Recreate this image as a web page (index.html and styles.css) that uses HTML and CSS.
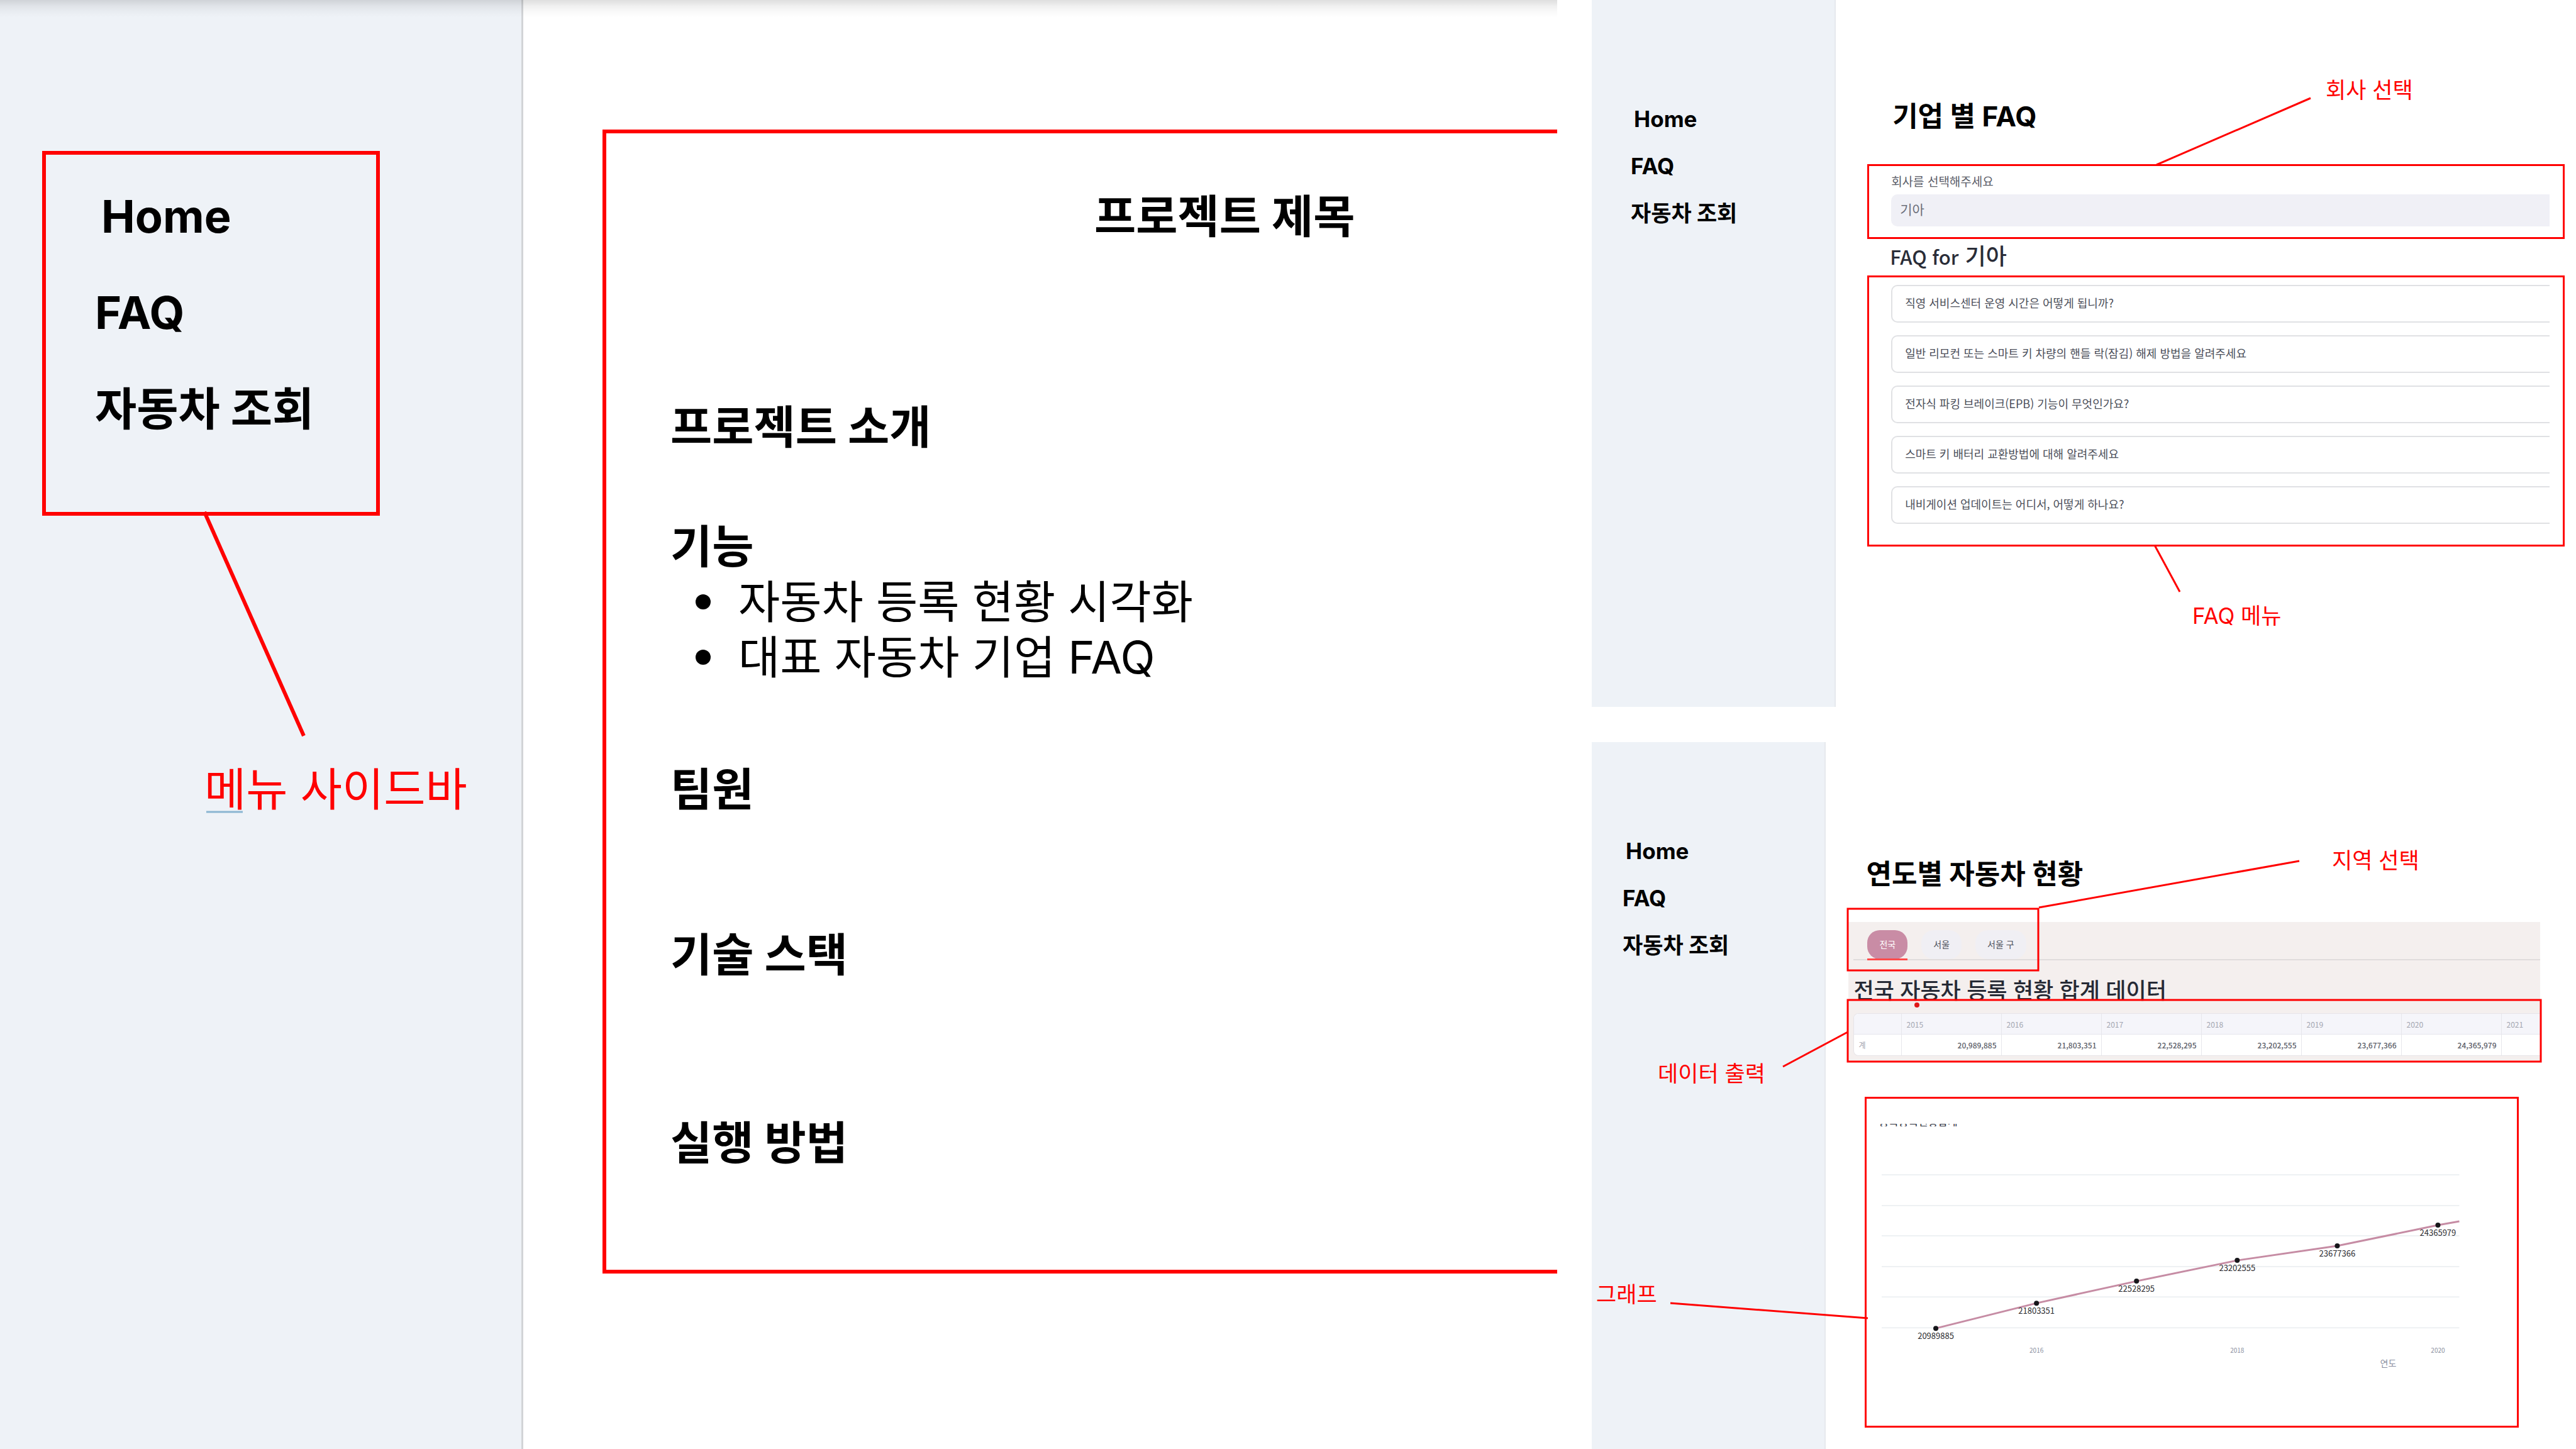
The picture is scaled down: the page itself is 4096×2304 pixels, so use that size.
FILE: index.html
```html
<!DOCTYPE html>
<html lang="ko">
<head>
<meta charset="utf-8">
<title>화면 설계</title>
<link rel="stylesheet" href="styles.css">
</head>
<body>
<div class="board">
  <section class="screen screen-home" id="home">
    <aside class="sidebar">
      <nav class="menu menu-large">
        <a class="menu-link menu-home" href="#home">Home</a>
        <a class="menu-link" href="#faq">FAQ</a>
        <a class="menu-link" href="#cars">자동차 조회</a>
      </nav>
    </aside>
    <main class="intro">
      <h1 class="intro-title">프로젝트 제목</h1>
      <h2 class="intro-heading about">프로젝트 소개</h2>
      <h2 class="intro-heading features">기능</h2>
      <ul class="feature-list">
        <li>자동차 등록 현황 시각화</li>
        <li>대표 자동차 기업 FAQ</li>
      </ul>
      <h2 class="intro-heading team">팀원</h2>
      <h2 class="intro-heading stack">기술 스택</h2>
      <h2 class="intro-heading run">실행 방법</h2>
    </main>
  </section>

  <div class="side-screens">
    <section class="screen screen-faq" id="faq">
      <aside class="sidebar">
        <nav class="menu">
          <a class="menu-link menu-home" href="#home">Home</a>
          <a class="menu-link" href="#faq">FAQ</a>
          <a class="menu-link" href="#cars">자동차 조회</a>
        </nav>
      </aside>
      <div class="faq-main">
        <h1 class="page-title">기업 별 FAQ</h1>
        <form class="company-form">
          <label class="company-label" for="company">회사를 선택해주세요</label>
          <select class="company-select" id="company">
            <option>기아</option>
          </select>
        </form>
        <h2 class="faq-heading"><span class="latin">FAQ for</span> 기아</h2>
        <div class="faq-list">
          <button class="faq-item" type="button">직영 서비스센터 운영 시간은 어떻게 됩니까?</button>
          <button class="faq-item" type="button">일반 리모컨 또는 스마트 키 차량의 핸들 락(잠김) 해제 방법을 알려주세요</button>
          <button class="faq-item" type="button">전자식 파킹 브레이크(EPB) 기능이 무엇인가요?</button>
          <button class="faq-item" type="button">스마트 키 배터리 교환방법에 대해 알려주세요</button>
          <button class="faq-item" type="button">내비게이션 업데이트는 어디서, 어떻게 하나요?</button>
        </div>
      </div>
    </section>

    <section class="screen screen-cars" id="cars">
      <aside class="sidebar">
        <nav class="menu">
          <a class="menu-link menu-home" href="#home">Home</a>
          <a class="menu-link" href="#faq">FAQ</a>
          <a class="menu-link" href="#cars">자동차 조회</a>
        </nav>
      </aside>
      <div class="cars-main">
        <h1 class="page-title">연도별 자동차 현황</h1>
        <div class="data-panel">
          <div class="tabs" role="tablist">
            <button class="tab tab-active" type="button" role="tab" aria-selected="true">전국</button>
            <button class="tab" type="button" role="tab" aria-selected="false">서울</button>
            <button class="tab" type="button" role="tab" aria-selected="false">서울 구</button>
          </div>
          <h2 class="data-heading">전국 자동차 등록 현황 합계 데이터</h2>
          <table class="data-table">
            <colgroup>
              <col class="col-name"><col class="col-year"><col class="col-year"><col class="col-year"><col class="col-year"><col class="col-year"><col class="col-year"><col>
            </colgroup>
            <thead>
              <tr><th></th><th>2015</th><th>2016</th><th>2017</th><th>2018</th><th>2019</th><th>2020</th><th>2021</th></tr>
            </thead>
            <tbody>
              <tr><th scope="row">계</th><td>20,989,885</td><td>21,803,351</td><td>22,528,295</td><td>23,202,555</td><td>23,677,366</td><td>24,365,979</td><td></td></tr>
            </tbody>
          </table>
        </div>
        <figure class="chart">
          <figcaption class="chart-title">종목등록현황합계</figcaption>
          <svg class="chart-plot" viewBox="0 0 1033 476">
            <g class="grid-lines">
              <path d="M24 77H942M24 126H942M24 174H942M24 223H942M24 271H942M24 320H942"/>
            </g>
            <polyline class="series" points="110,321 270,281 429,246 589,213 748,190 908,157 942,151"/>
            <g class="points">
              <circle cx="110" cy="321" r="4"/><circle cx="270" cy="281" r="4"/><circle cx="429" cy="246" r="4"/>
              <circle cx="589" cy="213" r="4"/><circle cx="748" cy="190" r="4"/><circle cx="908" cy="157" r="4"/>
            </g>
            <g class="point-labels">
              <text x="110" y="338">20989885</text>
              <text x="270" y="298">21803351</text>
              <text x="429" y="263">22528295</text>
              <text x="589" y="230">23202555</text>
              <text x="748" y="207">23677366</text>
              <text x="908" y="174">24365979</text>
            </g>
            <g class="axis-labels">
              <text x="270" y="360">2016</text>
              <text x="589" y="360">2018</text>
              <text x="908" y="360">2020</text>
              <text class="axis-title" x="829" y="382">연도</text>
            </g>
          </svg>
        </figure>
      </div>
    </section>
  </div>

  <svg class="notes" viewBox="0 0 4096 2304">
    <g class="note-lines">
      <path class="thick" d="M325 814L483 1170"/>
      <path d="M3429 262L3674 156"/>
      <path d="M3426 867L3466 941"/>
      <path d="M3242 1443L3656 1369"/>
      <path d="M2835 1696L2938 1641"/>
      <path d="M2656 2072L2970 2096"/>
      <rect x="2938" y="1445" width="303" height="98"/>
      <rect x="2938" y="1590" width="1102" height="98"/>
    </g>
    <circle class="note-dot" cx="3048" cy="1598" r="4"/>
    <path class="caret-line" d="M328 1291H386"/>
    <g class="note-labels">
      <text class="large" x="325" y="1281">메뉴 사이드바</text>
      <text x="3698" y="156">회사 선택</text>
      <text x="3486" y="992">FAQ 메뉴</text>
      <text x="3708" y="1381">지역 선택</text>
      <text x="2636" y="1720">데이터 출력</text>
      <text x="2538" y="2071">그래프</text>
    </g>
  </svg>
</div>
</body>
</html>
```
FILE: styles.css
```css
* {
  box-sizing: border-box;
}

body {
  margin: 0;
  background: #fff;
  color: #000;
  font-family: Inter, "Noto Sans CJK KR", sans-serif;
}

h1,
h2,
ul,
figure {
  margin: 0;
  padding: 0;
}

button,
select {
  border: 0;
  font-family: "Noto Sans CJK KR", sans-serif;
}

.board {
  position: relative;
  display: grid;
  grid-template-columns: 60.45% 1fr;
  column-gap: 55px;
  min-height: 100vh;
  overflow: hidden;
}

.side-screens {
  display: grid;
  grid-template-rows: 1fr 1fr;
  row-gap: 56px;
}

.screen {
  display: grid;
}

.screen-home {
  position: relative;
  grid-template-columns: 33.6% 1fr;
}

.screen-home::before {
  content: "";
  position: absolute;
  inset: 0 0 auto;
  height: 28px;
  background: linear-gradient(rgba(0, 0, 0, 0.13), rgba(0, 0, 0, 0.06) 35%, rgba(0, 0, 0, 0.02) 70%, rgba(0, 0, 0, 0));
}

.screen-faq {
  grid-template-columns: 24.8% 1fr;
}

.screen-cars {
  grid-template-columns: 23.8% 1fr;
}

/* Sidebars */

.sidebar {
  background: #eef2f7;
  border-right: 2px solid #e6e9ed;
}

.screen-home .sidebar {
  padding: 240px 225px 0 67px;
  border-right: 3px solid #d2d4d7;
}

.screen-faq .sidebar {
  padding: 152px 0 0 62px;
}

.screen-cars .sidebar {
  padding: 136px 0 0 49px;
}

.menu {
  display: flex;
  flex-direction: column;
  font-size: 35px;
  font-weight: 700;
  line-height: 75px;
}

.menu-link {
  color: #000;
  text-decoration: none;
}

.menu-home {
  padding-left: 5px;
}

.menu-large {
  padding: 21px 0 88px 78px;
  border: 6px solid #f00;
  font-size: 72px;
  line-height: 153px;
}

.menu-large .menu-home {
  padding-left: 10px;
}

/* Home */

.intro {
  align-self: start;
  margin: 206px 0 0 126px;
  padding: 88px 0 158px 102px;
  border: 6px solid #f00;
  border-right: 0;
  font-size: 72px;
  line-height: 88px;
}

.intro-title,
.intro-heading {
  font-size: 72px;
  font-weight: 700;
}

.intro-title {
  padding-left: 674px;
}

.about {
  margin-top: 247px;
}

.features {
  margin-top: 102px;
}

.team {
  margin-top: 122px;
}

.stack {
  margin-top: 175px;
}

.run {
  margin-top: 211px;
}

.feature-list {
  list-style: none;
}

.feature-list li {
  display: flex;
  align-items: center;
  gap: 44px;
  padding-left: 40px;
}

.feature-list li::before {
  content: "";
  width: 24px;
  height: 24px;
  border-radius: 50%;
  background: #000;
}

/* FAQ */

.page-title {
  margin-bottom: 49px;
  font-size: 44px;
  font-weight: 700;
  line-height: 54px;
}

.faq-main {
  padding: 158px 18px 0 50px;
}

.faq-main .page-title {
  padding-left: 40px;
}

.company-form {
  display: flex;
  flex-direction: column;
  gap: 7px;
  padding: 10px 21px 17px 35px;
  border: 3px solid #f00;
}

.company-label {
  color: #5b5e69;
  font-family: "Noto Sans CJK KR", sans-serif;
  font-size: 19px;
  line-height: 28px;
}

.company-select {
  appearance: none;
  height: 51px;
  padding: 0 14px 5px;
  border-radius: 10px 0 0 10px;
  background: #f0f0f6;
  color: #6b6e79;
  font-size: 21px;
}

.faq-heading {
  margin-bottom: 5px;
  padding-left: 36px;
  color: #2a2d38;
  font-family: "Noto Sans CJK KR", sans-serif;
  font-size: 36px;
  font-weight: 500;
  line-height: 50px;
}

.latin {
  font-size: 31px;
}

.faq-list {
  display: flex;
  flex-direction: column;
  gap: 20px;
  padding: 12px 21px 33px 35px;
  border: 3px solid #f00;
}

.faq-item {
  height: 60px;
  padding: 0 0 5px 20px;
  border: 2px solid #e0e1e4;
  border-right: 0;
  border-radius: 10px 0 0 10px;
  background: #fff;
  color: #4c4f5a;
  font-size: 18px;
  text-align: left;
}

/* Cars */

.cars-main {
  padding: 183px 57px 0 36px;
}

.cars-main .page-title {
  padding-left: 28px;
}

.data-panel {
  padding: 13px 0 9px 8px;
  background: #f4efee;
}

.tabs {
  display: flex;
  gap: 22px;
  padding-left: 22px;
  border-bottom: 2px solid #e0dcdc;
}

.tab {
  height: 46px;
  padding: 0 19px 2px;
  border-radius: 20px;
  background: #f0eff4;
  color: #4c4f5a;
  font-size: 14px;
}

.tab-active {
  position: relative;
  background: #c98ca5;
  color: #fff;
}

.tab-active::after {
  content: "";
  position: absolute;
  inset: auto 0 -2px;
  height: 3px;
  background: #ff4b4b;
}

.data-heading {
  margin: 23px 0 10px;
  color: #262a35;
  font-family: Inter, "Noto Sans CJK KR", sans-serif;
  font-size: 35px;
  font-weight: 500;
  line-height: 51px;
}

.data-table {
  width: 100%;
  table-layout: fixed;
  border: 1px solid #e6e4e8;
  border-right: 0;
  border-radius: 8px 0 0 8px;
  border-collapse: separate;
  border-spacing: 0;
  background: #fff;
  overflow: hidden;
  font-family: "Noto Sans CJK KR", sans-serif;
  font-size: 12px;
}

.col-name {
  width: 76px;
}

.col-year {
  width: 159px;
}

.data-table th,
.data-table td {
  height: 33px;
  padding: 0 8px 0 7px;
  border-right: 1px solid #e6e6ec;
}

.data-table th:last-child,
.data-table td:last-child {
  border-right: 0;
}

.data-table th {
  color: #a3a5b0;
  font-weight: 400;
  text-align: left;
}

.data-table thead th {
  background: #f5f5fa;
  border-bottom: 1px solid #e6e6ec;
}

.data-table td {
  color: #5a5d68;
  font-weight: 500;
  text-align: right;
}

.chart {
  margin: 56px 34px 0 26px;
  padding-top: 40px;
  border: 3px solid #f00;
}

/* Only the foot of the caption shows above the plot. */
.chart-title {
  display: flex;
  align-items: flex-end;
  height: 4px;
  padding-left: 19px;
  overflow: hidden;
  color: #2a2e3a;
  font-family: "Noto Sans CJK KR", sans-serif;
  font-size: 17px;
  line-height: 17px;
}

.chart-plot {
  display: block;
  width: 100%;
}

.chart-plot text {
  font-family: "Noto Sans CJK KR", sans-serif;
  text-anchor: middle;
}

.grid-lines {
  stroke: #eef1f3;
  stroke-width: 2;
}

.series {
  fill: none;
  stroke: #c68ca4;
  stroke-width: 3;
}

.points {
  fill: #16161a;
}

.point-labels {
  fill: #2c2c30;
  font-size: 13px;
}

.axis-labels {
  fill: #8a8fa0;
  font-size: 10px;
}

.axis-title {
  font-size: 14px;
}

/* Annotations drawn over the screens */

.notes {
  position: absolute;
  inset: 0;
  width: 100%;
  pointer-events: none;
}

.note-lines {
  fill: none;
  stroke: #f00;
  stroke-width: 3;
}

.thick {
  stroke-width: 6;
}

.note-dot {
  fill: #e01818;
}

.caret-line {
  stroke: #8ab5d2;
  stroke-width: 3;
}

.note-labels {
  fill: #f00;
  font-size: 35px;
}

.large {
  font-size: 72px;
}
```
